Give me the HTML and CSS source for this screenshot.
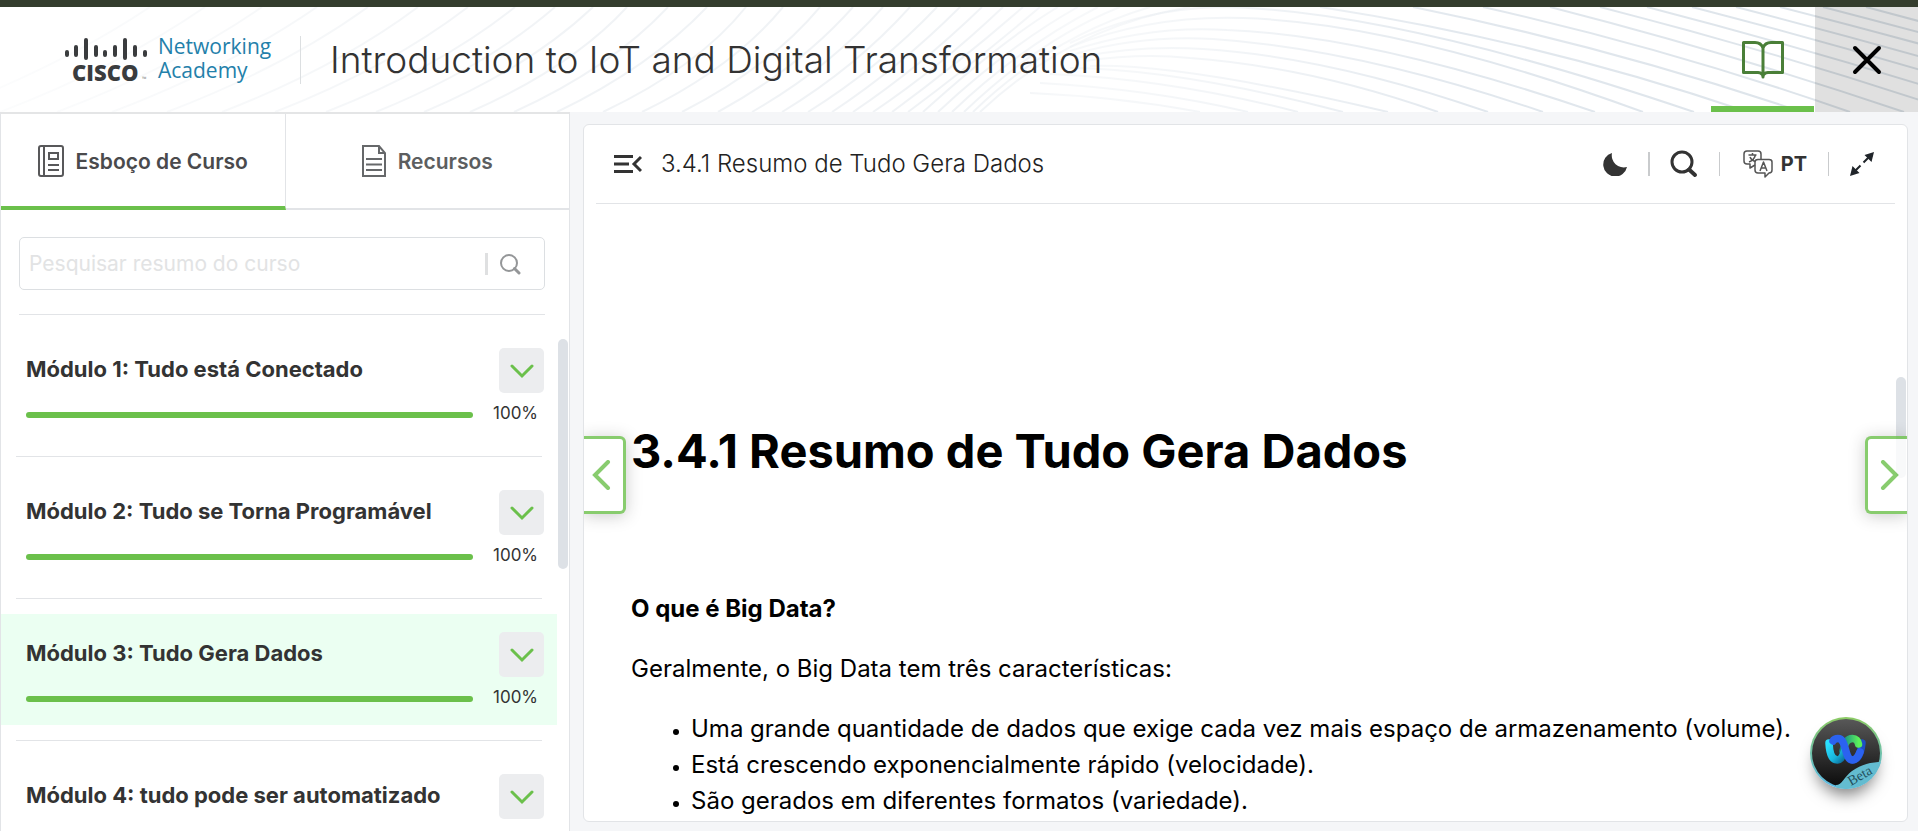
FILE: index.html
```html
<!DOCTYPE html>
<html lang="pt">
<head>
<meta charset="utf-8">
<meta name="viewport" content="width=device-width, initial-scale=1">
<title>Introduction to IoT and Digital Transformation</title>
<link rel="stylesheet" href="styles.css">
</head>
<body>
<div class="app">
  <header class="header">
    <svg class="waves" viewBox="0 0 1918 105" preserveAspectRatio="xMaxYMid slice" aria-hidden="true">
      <defs>
        <linearGradient id="fade" gradientUnits="userSpaceOnUse" x1="0" y1="0" x2="1918" y2="0">
          <stop offset="0" stop-color="#e9edf1" stop-opacity=".15"/>
          <stop offset=".3" stop-color="#e9edf1" stop-opacity=".65"/>
          <stop offset=".5" stop-color="#e9edf1" stop-opacity=".7"/>
          <stop offset=".56" stop-color="#e9edf1" stop-opacity=".35"/>
          <stop offset=".64" stop-color="#e6ebf0" stop-opacity=".5"/>
          <stop offset=".76" stop-color="#e2e8ee"/>
          <stop offset="1" stop-color="#dce3e9"/>
        </linearGradient>
      </defs>
      <g fill="none" stroke="url(#fade)" stroke-width="2">
        <path d="M-60 105Q60 60 150 0M0 105Q118 60 205 0M57 105Q175 60 262 0M112 105Q230 60 317 0M167 105Q285 60 368 0M222 105Q338 60 418 0M275 105Q390 60 468 0M326 105Q440 60 515 0M376 105Q486 60 555 0M424 105Q530 60 593 0M470 105Q572 60 627 0M514 105Q612 60 668 0M557 105Q650 60 707 0M603 105Q698 60 746 0M642 105Q734 60 783 0M682 105Q770 60 820 0M718 105Q800 60 853 0M752 105Q830 60 883 0M782 105Q856 60 910 0M808 105Q880 60 937 0M832 105Q900 60 960 0M853 105Q920 60 982 0M873 105Q940 60 1003 0M892 105Q960 55 1023 0M908 105Q975 55 1040 0"/>
        <path d="M923 105Q1000 35 1058 0M938 105Q1010 38 1078 0M952 105Q1020 40 1098 0M964 105Q1040 32 1120 0M973 105Q1050 30 1150 0M980 105Q1070 20 1190 0"/>
        <path d="M1070 36Q1140 2 1220 0Q1390 2 1694 105M1070 40Q1150 8 1243 11Q1400 16 1643 105M1070 44Q1150 18 1227 23Q1370 28 1595 105M1075 47Q1140 28 1213 32Q1360 42 1543 105M1080 50Q1140 38 1203 42Q1330 50 1488 105M1085 54Q1140 46 1190 51Q1310 60 1438 105M1090 59Q1180 56 1388 105M1070 61Q1180 62 1343 105M1050 67Q1170 72 1298 105M1040 76Q1150 82 1248 105M1030 86Q1120 90 1200 105"/>
        <path d="M1320 0Q1540 34 1748 105M1413 0Q1610 40 1802 105M1483 0Q1670 42 1850 105M1550 0Q1730 46 1904 105M1600 0Q1780 46 1956 105M1647 0Q1825 46 2008 105M1692 0Q1870 46 2060 105M1736 0Q1915 46 2110 105M1780 0Q1960 46 2160 105M1823 0Q2000 46 2210 105M1866 0Q2040 46 2260 105"/>
      </g>
    </svg>
    <a class="brand" href="#" aria-label="Cisco Networking Academy">
      <svg class="brand-mark" viewBox="0 -2 84 50" role="img" aria-label="Cisco">
        <g stroke="#3a3c3e" stroke-width="4" stroke-linecap="round">
          <path d="M3 15v3M12 10v8M22 3v18M32 10v8M41 15v3M51 10v8M61 3v18M71 10v8M81 15v3"/>
        </g>
        <text class="brand-cisco" x="8" y="44">CISCO</text>
        <text class="brand-tm" x="78" y="44">™</text>
      </svg>
      <span class="brand-name">Networking<br>Academy</span>
    </a>
    <h1 class="course-title">Introduction to IoT and Digital Transformation</h1>
    <button class="top-button top-book" type="button" aria-label="Curso">
      <svg width="44" height="40" viewBox="0 0 44 40" fill="none" stroke="#4a7f38" stroke-width="3" stroke-linejoin="round"><path d="M22 8Q20 2.500 14 2.500H2.500V32.500H17Q22 33 22 37Q22 33 27 32.500H41.500V2.500H30Q24 2.500 22 8ZM22 8V37"/></svg>
    </button>
    <button class="top-button top-close" type="button" aria-label="Fechar">
      <svg width="32" height="32" viewBox="0 0 32 32" fill="none" stroke="#000" stroke-width="4" stroke-linecap="round"><path d="M4 4 28 28M28 4 4 28"/></svg>
    </button>
  </header>

  <div class="body">
    <aside class="sidebar">
      <nav class="tabs">
        <button class="tab tab-active" type="button">
          <svg width="26" height="32" viewBox="0 0 26 32" fill="none" stroke="#58585a" stroke-width="2"><rect x="1" y="1" width="24" height="30" rx="2"/><path d="M6 1V31M10 20H21M10 25H21" /><rect x="11" y="8" width="9" height="6"/></svg>
          <span>Esboço de Curso</span>
        </button>
        <button class="tab" type="button">
          <svg width="24" height="32" viewBox="0 0 24 32" fill="none" stroke="#66686a" stroke-width="2"><path d="M1 1H17L23 8V31H1ZM17 1V8H23M4 14H20M4 19.500H20M4 25H20"/></svg>
          <span>Recursos</span>
        </button>
      </nav>
      <form class="search">
        <input class="search-input" type="search" aria-label="Pesquisar resumo do curso" placeholder="Pesquisar resumo do curso">
        <button class="search-button" type="button" aria-label="Pesquisar">
          <svg width="22" height="22" viewBox="0 0 22 22" fill="none" stroke="#949698" stroke-width="2"><circle cx="10" cy="10" r="8"/><path d="M15.500 15.500 20 20" stroke-width="3" stroke-linecap="round"/></svg>
        </button>
      </form>
      <ul class="modules">
        <li class="module">
          <div class="module-card">
            <div class="module-head"><h2 class="module-title">Módulo 1: Tudo está Conectado</h2><button class="expand" type="button" aria-label="Expandir módulo 1"><svg width="24" height="16" viewBox="0 0 24 16"><path d="M2 3 12 13 22 3"/></svg></button></div>
            <div class="progress"><span class="bar"></span><span class="percent">100%</span></div>
          </div>
        </li>
        <li class="module">
          <div class="module-card">
            <div class="module-head"><h2 class="module-title">Módulo 2: Tudo se Torna Programável</h2><button class="expand" type="button" aria-label="Expandir módulo 2"><svg width="24" height="16" viewBox="0 0 24 16"><path d="M2 3 12 13 22 3"/></svg></button></div>
            <div class="progress"><span class="bar"></span><span class="percent">100%</span></div>
          </div>
        </li>
        <li class="module">
          <div class="module-card module-current">
            <div class="module-head"><h2 class="module-title">Módulo 3: Tudo Gera Dados</h2><button class="expand" type="button" aria-label="Expandir módulo 3"><svg width="24" height="16" viewBox="0 0 24 16"><path d="M2 3 12 13 22 3"/></svg></button></div>
            <div class="progress"><span class="bar"></span><span class="percent">100%</span></div>
          </div>
        </li>
        <li class="module">
          <div class="module-card">
            <div class="module-head"><h2 class="module-title">Módulo 4: tudo pode ser automatizado</h2><button class="expand" type="button" aria-label="Expandir módulo 4"><svg width="24" height="16" viewBox="0 0 24 16"><path d="M2 3 12 13 22 3"/></svg></button></div>
          </div>
        </li>
      </ul>
      <span class="thumb thumb-side"></span>
    </aside>

    <main class="main">
      <section class="panel">
        <div class="toolbar">
          <button class="tool" type="button" aria-label="Recolher menu">
            <svg width="28" height="20" viewBox="0 0 28 20" fill="none" stroke="#333" stroke-width="3"><path d="M0 2.500H19M0 10H15M0 17.500H19M27 3 20 10 27 17"/></svg>
          </button>
          <p class="toolbar-title">3.4.1 Resumo de Tudo Gera Dados</p>
          <button class="tool" type="button" aria-label="Modo escuro">
            <svg width="24" height="24" viewBox="0 0 24 24"><path d="M9 1A12 12 0 0 0 24 15 12 12 0 1 1 9 1Z" fill="#333"/></svg>
          </button>
          <span class="rule rule-thick"></span>
          <button class="tool" type="button" aria-label="Pesquisar">
            <svg width="28" height="28" viewBox="0 0 28 28" fill="none" stroke="#333"><circle cx="12" cy="12" r="10" stroke-width="3"/><path d="M19 19.500 25 25" stroke-width="4" stroke-linecap="round"/></svg>
          </button>
          <span class="rule"></span>
          <button class="tool language" type="button">
            <svg width="30" height="28" viewBox="0 0 30 28" fill="none" stroke="#555" stroke-width="1.500" stroke-linejoin="round"><path d="M12 15 7 18V14H4Q1 14 1 11V4Q1 1 4 1H15Q18 1 18 4V9"/><path d="M15 9.500H26Q29 9.500 29 12V20Q29 23 26 23L22 27V23H15Q12 23 12 20V12Q12 9.500 15 9.500Z"/><path d="M5.500 5H13.500M9.500 3V5M6 12Q11 10 12.500 5M7 7Q8 10 12 11.500M17 21 20.500 12 24 21M18 18H23"/></svg>
            <span>PT</span>
          </button>
          <span class="rule"></span>
          <button class="tool" type="button" aria-label="Tela cheia">
            <svg width="26" height="26" viewBox="0 0 26 26" fill="#20252a"><path d="M25 1 22.500 11 15.500 4ZM1 25 3.500 15 10.500 22Z"/><path d="M21 5 14.500 11.500M11.500 14.500 5 21" stroke="#20252a" stroke-width="2"/></svg>
          </button>
        </div>
        <article class="article">
          <h2 class="article-title">3.4.1 Resumo de Tudo Gera Dados</h2>
          <h3 class="article-subtitle">O que é Big Data?</h3>
          <p class="article-text">Geralmente, o Big Data tem três características:</p>
          <ul class="article-list">
            <li>Uma grande quantidade de dados que exige cada vez mais espaço de armazenamento (volume).</li>
            <li>Está crescendo exponencialmente rápido (velocidade).</li>
            <li>São gerados em diferentes formatos (variedade).</li>
          </ul>
        </article>
        <span class="thumb thumb-main"></span>
        <button class="pager pager-prev" type="button" aria-label="Anterior"><svg width="20" height="30" viewBox="0 0 20 30"><path d="M17 2 4 15 17 28"/></svg></button>
        <button class="pager pager-next" type="button" aria-label="Próximo"><svg width="20" height="30" viewBox="0 0 20 30"><path d="M3 2 16 15 3 28"/></svg></button>
        <button class="assistant" type="button" aria-label="Webex Beta">
          <svg width="72" height="72" viewBox="0 0 72 72">
            <defs>
              <linearGradient id="ring" x1="0" y1="0" x2="0" y2="1"><stop offset="0" stop-color="#8ccb63"/><stop offset=".5" stop-color="#6fc0a8"/><stop offset="1" stop-color="#5ab8e6"/></linearGradient>
              <linearGradient id="disc" x1="0" y1="0" x2="0" y2="1"><stop offset="0" stop-color="#585858"/><stop offset="1" stop-color="#0b0b0b"/></linearGradient>
              <linearGradient id="cyan" x1="0" y1="0" x2="1" y2="1"><stop offset="0" stop-color="#2be0ff"/><stop offset=".6" stop-color="#18b5dd"/><stop offset="1" stop-color="#0a6b98"/></linearGradient>
              <linearGradient id="green" x1="0" y1="0" x2="1" y2="0"><stop offset="0" stop-color="#148a88"/><stop offset="1" stop-color="#5cf05a"/></linearGradient>
              <clipPath id="round"><circle cx="36" cy="36" r="36"/></clipPath>
            </defs>
            <circle cx="36" cy="36" r="36" fill="url(#ring)"/>
            <circle cx="36" cy="36" r="34" fill="url(#disc)"/>
            <g fill="none" stroke-width="7.500" stroke-linecap="round">
              <path d="M52 26C51 36 48 43 42 43" stroke="#1f4fc4"/>
              <path d="M33 34C35 26 37 21.500 42.500 21.500C46 21.500 48 24 48.500 27" stroke="url(#green)"/>
              <path d="M19 26C19.500 36 22 43 27.500 43C31 43 33 39 35 33" stroke="url(#cyan)"/>
              <path d="M23 24C24 22 26 21.500 28 21.500C37 21.500 34 43 42.500 43C46 43 48 40 50 35" stroke="#2b62f0"/>
            </g>
            <g clip-path="url(#round)">
              <path d="M26 68C32 68 34 60 42 54C52 47 62 45 72 45V72H26Z" fill="#63bcd0"/>
              <text class="beta" x="41" y="69" transform="rotate(-30 41 69)">Beta</text>
            </g>
          </svg>
        </button>
      </section>
    </main>
  </div>
</div>
</body>
</html>
```
FILE: styles.css
```css
* { box-sizing: border-box; }

body {
  margin: 0;
  font-family: Inter, "Liberation Sans", sans-serif;
  color: #333;
  background: #f5f6f8;
}

h1, h2, h3, p, ul { margin: 0; padding: 0; }
svg { display: block; flex: none; }

button {
  margin: 0;
  padding: 0;
  border: 0;
  background: none;
  font: inherit;
  color: inherit;
  cursor: pointer;
}

.app {
  display: flex;
  flex-direction: column;
  height: 100vh;
  overflow: hidden;
  border-top: 7px solid #343d2d;
}

/* Header */
.header {
  position: relative;
  flex: none;
  display: flex;
  align-items: center;
  height: 105px;
  background: #fff;
}
.waves { position: absolute; inset: 0; width: 100%; height: 100%; }

.brand {
  position: relative;
  display: flex;
  align-items: center;
  gap: 10px;
  height: 48px;
  width: 301px;
  padding-left: 64px;
  border-right: 1px solid #dcdfe1;
  text-decoration: none;
}
.brand-mark { width: 84px; height: 50px; overflow: visible; }
.brand-cisco { font: 800 22px "Open Sans", sans-serif; fill: #3a3c3e; }
.brand-tm { font: 6px "Open Sans", sans-serif; fill: #888; }
.brand-name {
  padding-bottom: 3px;
  font: 21px/24px "Open Sans", sans-serif;
  color: #2380aa;
}
.course-title {
  position: relative;
  flex: 1;
  padding-left: 29px;
  font-size: 37px;
  line-height: 48px;
  font-weight: 300;
}
.top-button {
  position: relative;
  display: flex;
  align-items: center;
  justify-content: center;
  height: 100%;
}
.top-book { width: 103px; border-bottom: 6px solid #6bc04b; padding-top: 6px; margin-right: 1px; }
.top-close { width: 103px; background: rgba(0, 0, 0, .12); }

.body { flex: 1; display: flex; min-height: 0; }

/* Sidebar */
.sidebar {
  position: relative;
  flex: 0 0 570px;
  border: 1px solid #e2e4e7;
  border-top: 2px solid #e4e5e6;
  border-bottom: 0;
  background: #fff;
  overflow: hidden;
}
.tabs { display: flex; height: 96px; }
.tab {
  flex: 1;
  display: flex;
  align-items: center;
  justify-content: center;
  gap: 12px;
  border-bottom: 2px solid #e2e4e7;
  font-size: 21px;
  font-weight: 600;
  color: #5c5e60;
}
.tab-active {
  padding-top: 2px;
  border-right: 1px solid #e2e4e7;
  border-bottom: 4px solid #6bc04b;
  color: #4a4a4c;
}
.search {
  display: flex;
  align-items: center;
  height: 53px;
  margin: 27px 24px 24px 18px;
  border: 1px solid #dcdfe2;
  border-radius: 5px;
}
.search-input {
  flex: 1;
  min-width: 0;
  padding: 0 9px;
  border: 0;
  outline: 0;
  background: none;
  font: 21px/28px Inter, sans-serif;
}
.search-input::placeholder { color: #e2e3e4; opacity: 1; }
.search-button {
  padding: 0 23px 0 11px;
  border-left: 3px solid #dfe0e1;
}
.modules {
  list-style: none;
  width: 556px;
}
.modules::before {
  content: "";
  display: block;
  height: 1px;
  margin: 0 12px 0 18px;
  background: #e2e4e7;
}
.module { padding-top: 15px; }
.module::after {
  content: "";
  display: block;
  height: 1px;
  margin: 15px 15px 0;
  background: #e2e4e7;
}
.module-card { padding: 18px 13px 16px 25px; }
.module-current { background: #ebfff2; }
.module-head { display: flex; align-items: center; justify-content: space-between; }
.module-title { padding-bottom: 4px; font-size: 22px; line-height: 28px; font-weight: 700; }
.expand {
  display: flex;
  align-items: center;
  justify-content: center;
  width: 45px;
  height: 45px;
  border-radius: 5px;
  background: #ecedef;
}
.expand path {
  fill: none;
  stroke: #6bc04b;
  stroke-width: 3;
  stroke-linecap: round;
}
.progress { display: flex; align-items: center; gap: 20px; margin-top: 8px; }
.bar { flex: 1; height: 6px; margin-top: 4px; border-radius: 3px; background: #6bc04b; }
.percent { width: 51px; font-size: 17px; line-height: 24px; }

.thumb {
  position: absolute;
  width: 10px;
  border-radius: 5px;
  background: #dde1e6;
}
.thumb-side { right: 1px; top: 225px; height: 230px; }
.thumb-main { right: 1px; top: 252px; height: 101px; }

/* Content panel */
.main { flex: 1; min-width: 0; display: flex; padding: 12px 10px 9px 13px; }
.panel {
  position: relative;
  flex: 1;
  min-width: 0;
  border: 1px solid #e2e4e7;
  border-radius: 6px;
  background: #fff;
  overflow: hidden;
}
.toolbar {
  display: flex;
  align-items: center;
  height: 79px;
  margin: 0 12px;
  padding: 0 20px 0 18px;
  border-bottom: 1px solid #e2e4e7;
}
.toolbar-title {
  flex: 1;
  padding-left: 19px;
  font-size: 24px;
  line-height: 32px;
  font-weight: 300;
  color: #222;
}
.rule { width: 1px; height: 24px; margin: 0 20px 0 21px; background: #c9cbcd; }
.rule-thick { width: 2px; }
.language {
  display: flex;
  align-items: center;
  gap: 8px;
  padding-left: 3px;
  font-size: 20px;
  font-weight: 700;
}
.article { padding: 211px 47px 0; color: #000; font-size: 24px; line-height: 36px; }
.article-title { font-size: 47px; line-height: 72px; font-weight: 700; }
.article-subtitle { margin-top: 104px; font-size: 24px; font-weight: 700; }
.article-text { margin-top: 24px; }
.article-list { margin-top: 24px; padding-left: 60px; }
.article-list li::marker { font-size: 18px; }

.pager {
  position: absolute;
  top: 311px;
  display: flex;
  align-items: center;
  justify-content: center;
  width: 42px;
  height: 78px;
  border: 3px solid #6bc04b;
  background: #fff;
  box-shadow: 0 2px 16px rgba(0, 0, 0, .25);
  opacity: .8;
}
.pager path { fill: none; stroke: #6bc04b; stroke-width: 4; stroke-linecap: round; }
.pager-prev { left: 0; padding-right: 6px; border-left: 0; border-radius: 0 6px 6px 0; }
.pager-next { right: 0; padding-left: 4px; border-right: 0; border-radius: 6px 0 0 6px; }

.assistant {
  position: absolute;
  right: 25px;
  bottom: 32px;
  border-radius: 50%;
  box-shadow: 0 12px 16px -6px rgba(0, 0, 0, .5);
}
.beta { font: 14px "Liberation Serif", serif; fill: #24505c; }
```
